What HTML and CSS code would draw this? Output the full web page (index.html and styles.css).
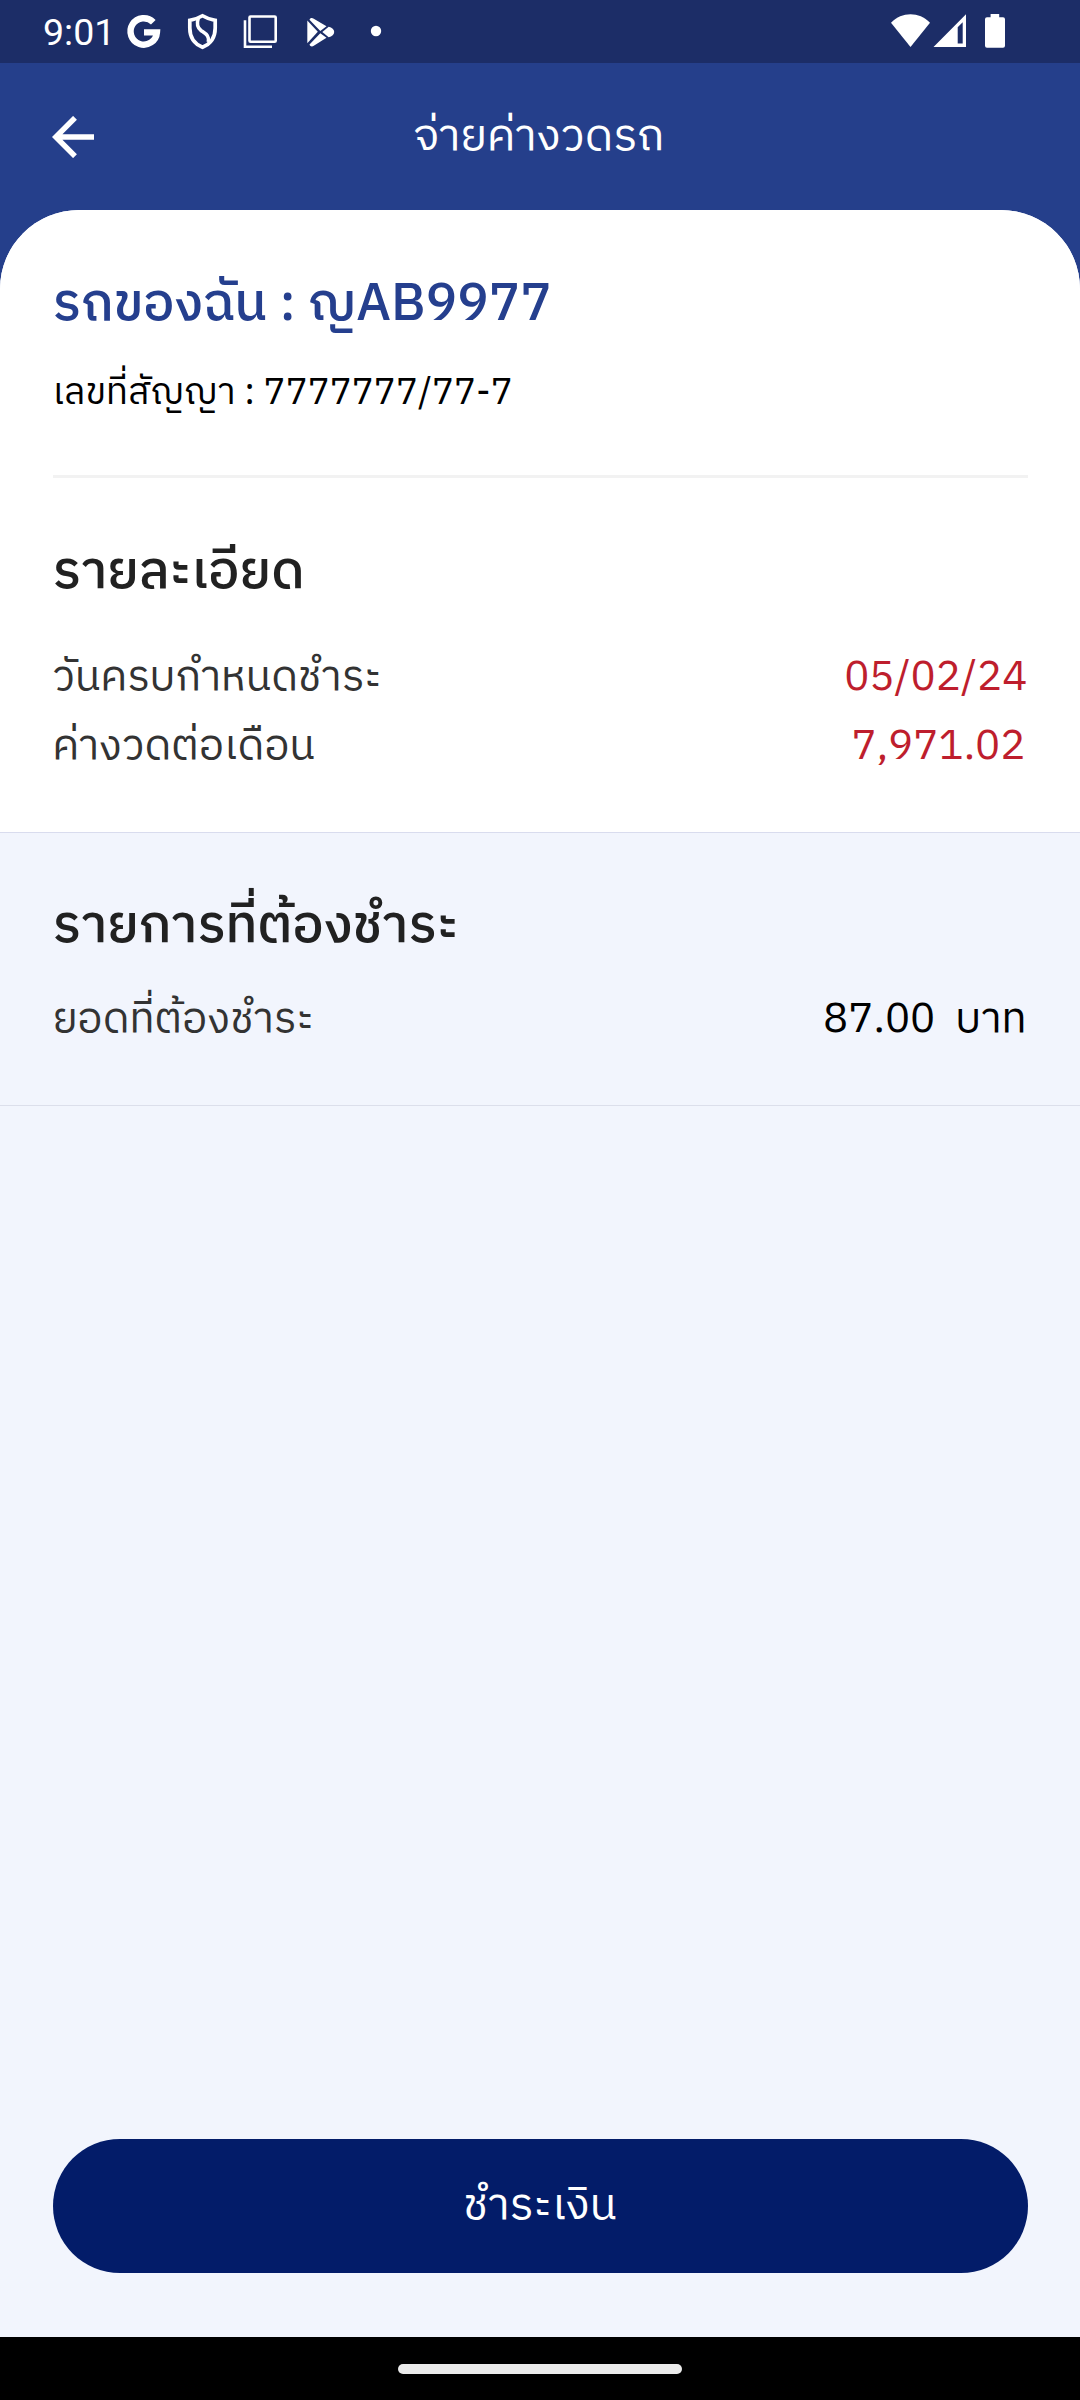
FILE: index.html
```html
<!DOCTYPE html>
<html lang="th">
<head>
<meta charset="utf-8">
<title>จ่ายค่างวดรถ</title>
<link rel="stylesheet" href="styles.css">
</head>
<body>
<div class="screen">
  <div class="status-bar">
    <span class="time">9:01</span>
    <svg class="notifications" viewBox="120 0 270 63" width="270" height="63" fill="none" stroke="#fff">
      <path d="M153.300 22.300A13.200 13.200 0 1 0 156.900 32.400H144" stroke-width="6.400"/>
      <path d="M202.500 15.800Q208 19.200 215.200 20.300V28C215.200 38 210.500 44 202.500 47.200C194.500 44 189.800 38 189.800 28V20.300Q197 19.200 202.500 15.800Z" stroke-width="3.700"/>
      <path d="M198.200 18.500C196.500 24 197 27.500 201 30.500C206 34 209.500 35.500 208.300 42" stroke-width="3.500"/>
      <rect x="249.500" y="16.500" width="26.200" height="25.200" rx="1" stroke-width="2.600"/>
      <path d="M245 20.200V46.700H272" stroke-width="2.600"/>
      <g fill="#fff" stroke="none">
        <path d="M307.300 20.500L317.800 31.800L307.300 43.200Z"/>
        <path d="M309.500 19.700C310 18 312 17.600 313.800 18.800L326.500 26.200L320.300 31Z"/>
        <path d="M309.500 44.500C310 46.500 312 47 313.800 45.800L326.500 37.800L320.300 33.200Z"/>
        <path d="M322.300 32L328.700 26.700C332 27.500 334.200 29.500 334.200 32C334.200 34.500 332 36.500 328.700 37.300Z"/>
        <circle cx="376" cy="31" r="5.200"/>
      </g>
    </svg>
    <svg class="system" viewBox="890 0 120 63" width="120" height="63" fill="#fff">
      <path d="M910.500 47L891 22.700C902 11.500 919 11.500 930 22.700Z"/>
      <path fill-rule="evenodd" d="M933.500 47L966 14.300V47ZM957.700 27.200V43.500H962.700V22.300Z"/>
      <path d="M990.600 14H999.200V17.300H1003Q1005 17.300 1005 19.300V45.800Q1005 47.800 1003 47.800H987Q985 47.800 985 45.800V19.300Q985 17.300 987 17.300H990.600Z"/>
    </svg>
  </div>

  <header class="app-bar">
    <svg class="back" viewBox="0 0 42 42" width="42" height="42" fill="none" stroke="#fff" stroke-width="5.400">
      <path d="M42 21H5M23 1.800L3.800 21L23 40.200"/>
    </svg>
    <h1>จ่ายค่างวดรถ</h1>
  </header>

  <main class="content">
    <section class="card">
      <h2 class="car">รถของฉัน : ญAB9977</h2>
      <p class="contract">เลขที่สัญญา : 7777777/77-7</p>
      <hr>
      <h2>รายละเอียด</h2>
      <div class="rows">
        <div class="row"><span>วันครบกำหนดชำระ</span><span class="value due">05/02/24</span></div>
        <div class="row"><span>ค่างวดต่อเดือน</span><span class="value due amount">7,971.02</span></div>
      </div>
    </section>
    <section class="payable">
      <h2>รายการที่ต้องชำระ</h2>
      <div class="row"><span>ยอดที่ต้องชำระ</span><span class="value total"><span>87.00</span><span>บาท</span></span></div>
    </section>
  </main>

  <footer class="actions"><button class="pay">ชำระเงิน</button></footer>
  <div class="nav-bar"><div class="handle"></div></div>
</div>
</body>
</html>
```
FILE: styles.css
```css
* { box-sizing: border-box; }

body {
  margin: 0;
  background: #253f8b;
  font-family: "IBM Plex Sans Thai", "Noto Sans", sans-serif;
}

h1, h2, p { margin: 0; }

.screen {
  display: flex;
  flex-direction: column;
  width: 1080px;
  height: 2400px;
}

.status-bar {
  display: flex;
  align-items: center;
  height: 63px;
  padding: 0 70px 0 43px;
  background: #1c2d67;
}

.time {
  width: 77px;
  color: #fff;
  font: 400 37.5px/60px Roboto, sans-serif;
}

.system { margin-left: auto; }

.app-bar {
  display: grid;
  grid-template-columns: 42px 1fr 42px;
  align-items: center;
  height: 147px;
  padding: 0 54px 0 52px;
}

h1 {
  color: #fff;
  font-size: 44.625px;
  font-weight: 400;
  text-align: center;
}

.content {
  flex: 1;
  background: #f2f5fd;
  border-radius: 79px 79px 0 0;
}

.card {
  padding: 51px 52.5px;
  background: #fff;
  border-bottom: 1px solid #d9dcee;
  border-radius: 79px 79px 0 0;
}

h2 {
  color: #212121;
  font-size: 52.5px;
  font-weight: 500;
  line-height: 87px;
}

.car { color: #253f8e; }

.contract {
  margin-top: 15px;
  font-size: 36.75px;
  line-height: 61px;
}

hr {
  height: 3px;
  margin: 51px 0;
  border: 0;
  background: #f2f2f2;
}

.rows { margin-top: 27px; }

.row {
  display: flex;
  justify-content: space-between;
  color: #333;
  font-size: 42px;
  line-height: 69px;
}

.due { color: #be1e2d; }

.amount { padding-right: 2px; }

.total {
  display: flex;
  gap: 20px;
  padding-right: 1px;
  color: #000;
}

.payable {
  padding: 50px 52.5px 51px;
  border-bottom: 1px solid #dcdfeb;
}

.payable .row { margin-top: 15px; }

.actions {
  padding: 0 52.5px 64px;
  background: #f2f5fd;
}

.pay {
  display: block;
  width: 100%;
  height: 134px;
  border: 0;
  border-radius: 67px;
  background: #031c69;
  color: #fff;
  font: 400 44.625px "IBM Plex Sans Thai", sans-serif;
}

.nav-bar {
  display: flex;
  align-items: center;
  justify-content: center;
  height: 63px;
  background: #000;
}

.handle {
  width: 284px;
  height: 10px;
  border-radius: 5px;
  background: #ebebeb;
}
```
